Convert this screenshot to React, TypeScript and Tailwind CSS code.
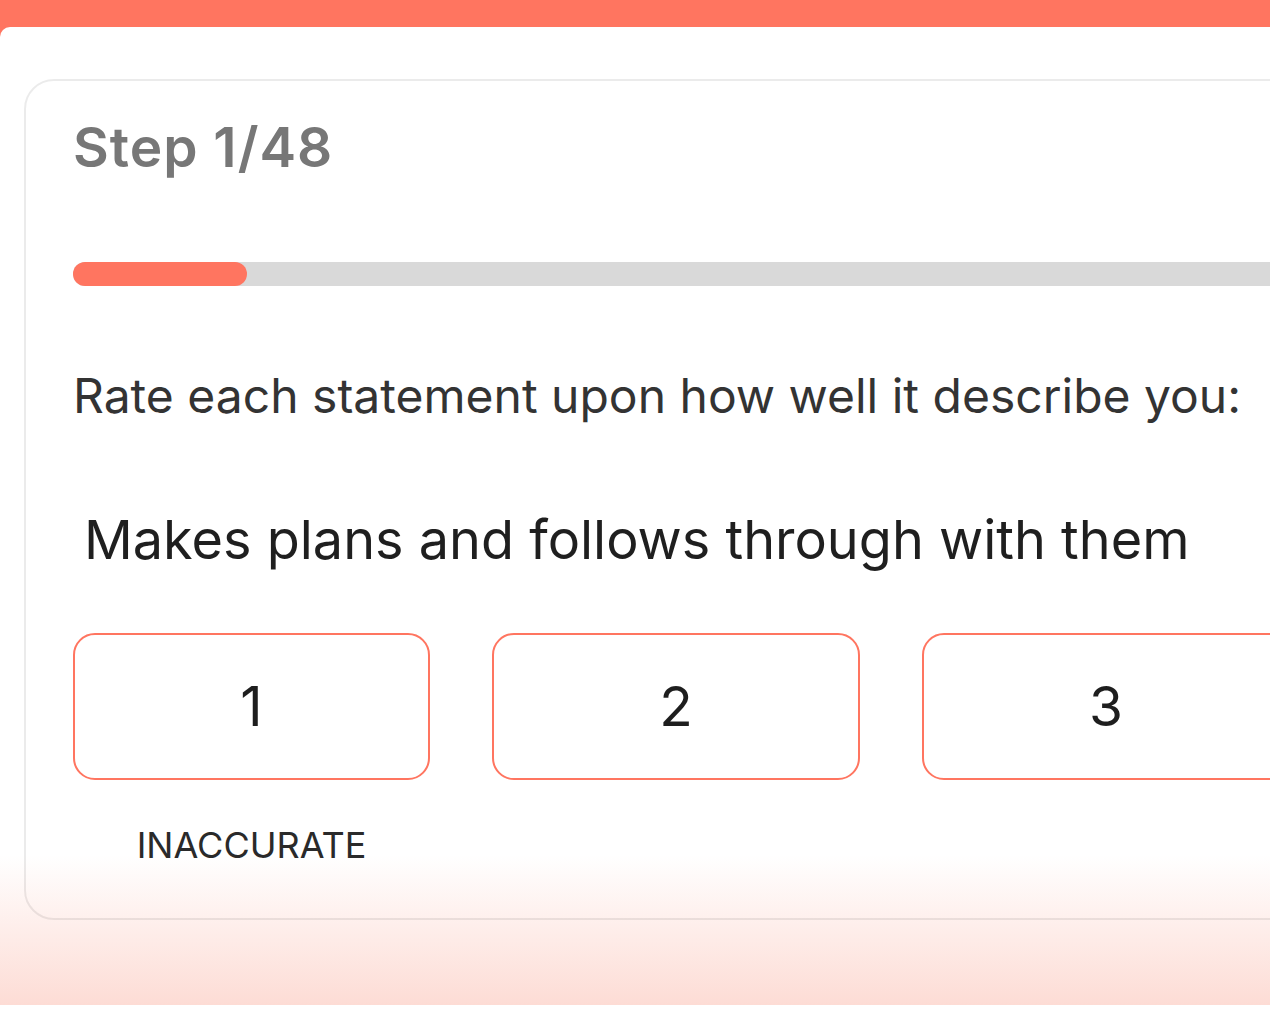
const options = [
  { value: 1, label: 'INACCURATE', width: 'w-[357px]' },
  { value: 2, label: '', width: 'w-[368px]' },
  { value: 3, label: '', width: 'w-[368px]' },
];

export default function App() {
  const step = 1;
  const total = 48;

  return (
    <div className="w-[1270px] h-[1020px] overflow-hidden bg-[#FF7560] pt-[27px] font-['Inter',sans-serif]">
      <div className="h-[993px] rounded-tl-[10px] bg-[linear-gradient(to_bottom,#ffffff_828px,#FDDCD5_978px,#ffffff_978px)]">
        <div className="pt-[52px] pl-[24px]">
          <div className="w-[1400px] rounded-[30px] border-2 border-black/[0.08] pl-[47px] pt-[39px] pb-[55px]">
            <h1 className="text-[55px] leading-none font-semibold tracking-[1px] text-[#777777]">
              Step {step}/{total}
            </h1>

            <div className="mt-[87px] h-[24px] w-[1300px] rounded-full bg-[#D9D9D9]">
              <div className="h-full w-[174px] rounded-full bg-[#FF7560]" />
            </div>

            <p className="mt-[86px] text-[48px] leading-none text-[#333333]">
              Rate each statement upon how well it describe you:
            </p>

            <p className="mt-[93px] ml-[11px] text-[54px] leading-none text-[#1f1f1f]">
              Makes plans and follows through with them
            </p>

            <div className="mt-[66px] flex gap-[62px]">
              {options.map((opt) => (
                <div key={opt.value} className={`${opt.width} shrink-0 flex flex-col items-center`}>
                  <button className="w-full h-[147px] rounded-[22px] border-[2.5px] border-[#FF7560] bg-white flex items-center justify-center text-[55px] leading-none text-[#1e1e1e]">
                    {opt.value}
                  </button>
                  {opt.label && (
                    <span className="mt-[47px] text-[36px] leading-none text-[#2a2a2a]">{opt.label}</span>
                  )}
                </div>
              ))}
            </div>
          </div>
        </div>
      </div>
    </div>
  );
}
